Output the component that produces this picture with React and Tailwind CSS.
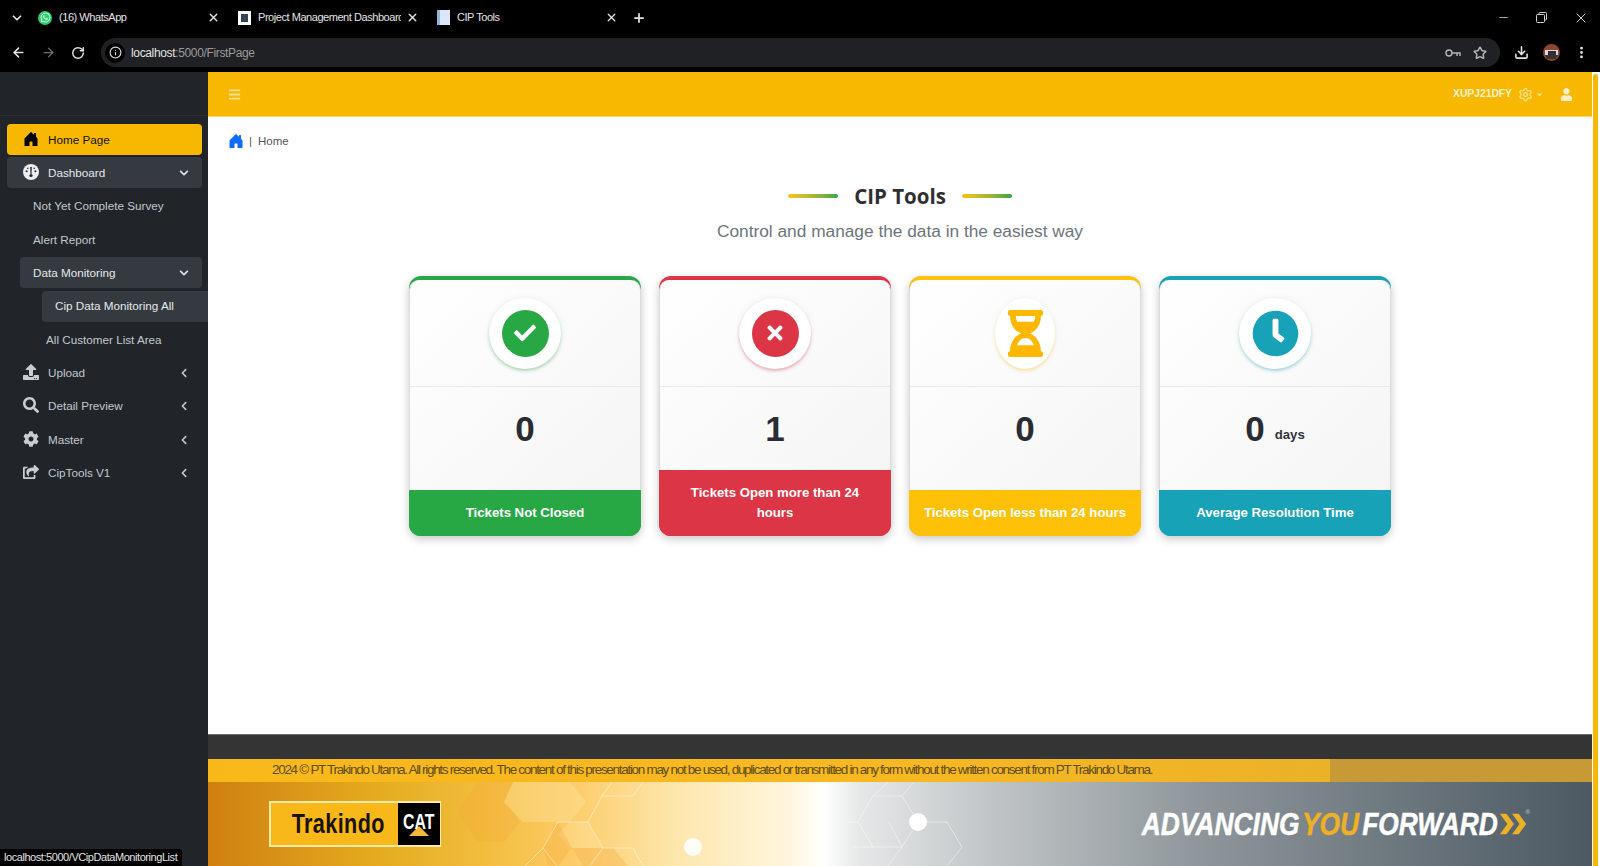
import React from "react";
import {
  FaUpload,
  FaSearch,
  FaCog,
  FaShareSquare,
  FaChevronDown,
  FaChevronLeft,
  FaBars,
  FaUser,
  FaCheck,
  FaTimes,
  FaHourglassHalf,
  FaClock,
  FaWhatsapp,
  FaCaretDown,
} from "react-icons/fa";
import { BsHouseDoorFill } from "react-icons/bs";
import {
  ArrowLeft,
  ArrowRight,
  RotateCw,
  Info,
  Star,
  Download,
  EllipsisVertical,
  X,
  Plus,
  Minus,
  ChevronDown,
  Settings,
} from "lucide-react";

const tabs = [
  { title: "(16) WhatsApp", kind: "wa", width: "w-[200px]" },
  { title: "Project Management Dashboard", kind: "doc", width: "w-[199px]" },
  { title: "CIP Tools", kind: "page", width: "w-[199px]" },
];

function KeyIcon() {
  return (
    <svg width="16" height="10" viewBox="0 0 16 10" fill="none" stroke="currentColor" strokeWidth="1.4">
      <circle cx="4" cy="5" r="3" />
      <path d="M7 5h8v3M12 5v3" />
    </svg>
  );
}

function RestoreIcon() {
  return (
    <svg width="11" height="11" viewBox="0 0 11 11" fill="none" stroke="#d0d0d0" strokeWidth="1">
      <rect x="0.5" y="2.5" width="8" height="8" rx="1" />
      <path d="M3 2.5V1.5a1 1 0 0 1 1-1h5.5a1 1 0 0 1 1 1V7a1 1 0 0 1-1 1h-1" />
    </svg>
  );
}

function Avatar() {
  return (
    <svg width="17" height="17" viewBox="0 0 17 17">
      <circle cx="8.5" cy="8.5" r="8.5" fill="#8f4334" />
      <rect x="2" y="6" width="13" height="5" fill="#d8d8d8" />
      <rect x="5" y="7" width="8" height="4" fill="#2c3035" />
      <path d="M2 11h13l-2 4H4z" fill="#3b3130" />
    </svg>
  );
}

function BrowserChrome() {
  return (
    <div className="h-[72px] bg-black text-[#e3e3e3] font-['Liberation_Sans',sans-serif] shrink-0">
      <div className="h-[35px] flex items-center">
        <div className="w-[33px] flex justify-center">
          <ChevronDown size={14} strokeWidth={3} />
        </div>
        {tabs.map((t) => (
          <div key={t.title} className={`${t.width} flex items-center pl-[5px]`}>
            {t.kind === "wa" && (
              <div className="w-[14px] h-[14px] rounded-full bg-[#25d366] flex items-center justify-center shrink-0">
                <FaWhatsapp size={11} className="text-white" />
              </div>
            )}
            {t.kind === "doc" && (
              <div className="w-[13px] h-[14px] bg-white flex items-center justify-center shrink-0">
                <div className="w-[7px] h-[8px] bg-[#33465a]" />
              </div>
            )}
            {t.kind === "page" && (
              <div className="w-[13px] h-[15px] bg-[#dce8f7] border-l-[3px] border-[#8fb4e0] shrink-0" />
            )}
            <span className="ml-[7px] text-[11px] tracking-[-0.45px] flex-1 whitespace-nowrap overflow-hidden">{t.title}</span>
            <X size={13} strokeWidth={2.5} className="ml-[5px] mr-[13px] shrink-0" />
          </div>
        ))}
        <Plus size={14} strokeWidth={3} className="ml-[1px]" />
        <div className="ml-auto flex items-center gap-[26px] pr-[11px]">
          <Minus size={13} className="text-[#a9a9a9]" />
          <RestoreIcon />
          <X size={16} strokeWidth={1.5} className="text-[#d0d0d0]" />
        </div>
      </div>
      <div className="h-[35px] flex items-center">
        <div className="w-[101px] flex items-center pl-[11px] gap-[15px]">
          <ArrowLeft size={15} strokeWidth={2.5} />
          <ArrowRight size={15} strokeWidth={2} className="text-[#6f6f6f]" />
          <RotateCw size={14} strokeWidth={2.5} />
        </div>
        <div className="w-[1399px] h-[29px] rounded-full bg-[#202124] flex items-center pl-[4px] pr-[13px]">
          <div className="w-[20px] h-[20px] rounded-full bg-black flex items-center justify-center">
            <Info size={13} />
          </div>
          <span className="ml-[6px] text-[12px] tracking-[-0.35px] text-[#e3e3e3]">
            localhost<span className="text-[#9a9a9a]">:5000/FirstPage</span>
          </span>
          <div className="ml-auto flex items-center gap-[12px] text-[#b5b5b5]">
            <KeyIcon />
            <Star size={14} strokeWidth={2.5} />
          </div>
        </div>
        <div className="flex-1 flex items-center justify-between pl-[14px] pr-[11px]">
          <Download size={15} strokeWidth={2.5} />
          <Avatar />
          <EllipsisVertical size={15} strokeWidth={2.5} />
        </div>
      </div>
    </div>
  );
}

function GaugeIcon({ size, className }) {
  return (
    <svg width={size} height={size} viewBox="0 0 16 16" className={className}>
      <circle cx="8" cy="8" r="8" fill="#eceef0" />
      <path d="M7.2 3h1.6l-.3 7h-1z" fill="#212529" />
      <circle cx="8" cy="11.5" r="1.6" fill="#212529" />
      <circle cx="3.6" cy="7.2" r="1" fill="#212529" />
      <circle cx="12.4" cy="7.2" r="1" fill="#212529" />
      <circle cx="4.8" cy="4.2" r="0.8" fill="#212529" />
      <circle cx="11.2" cy="4.2" r="0.8" fill="#212529" />
    </svg>
  );
}

function SideRow({ icon: Icon, label, tone = "idle", indent = "", arrow, textPad = "pl-[41px]" }) {
  const tones = {
    home: "bg-[#f8b700] text-[#111] shadow-sm",
    open: "bg-[#343a40] text-[#e6e8ea]",
    idle: "text-[#c2c7d0]",
  };
  return (
    <div className={`relative h-[31px] shrink-0 rounded-[4px] flex items-center ${indent} ${tones[tone]}`}>
      {Icon && (
        <span className="absolute left-[16px] -top-[1px] h-full flex items-center">
          <Icon size={16} className={tone === "home" ? "text-black" : "text-[#c9cdd2]"} />
        </span>
      )}
      <span className={`text-[11.7px] whitespace-nowrap ${textPad}`}>{label}</span>
      {arrow === "down" && <FaChevronDown size={10} className="absolute right-[13px] text-[#e6e8ea]" />}
      {arrow === "left" && <FaChevronLeft size={10} className="absolute right-[13px] text-[#c2c7d0]" />}
    </div>
  );
}

function Sidebar() {
  return (
    <aside className="w-[208px] shrink-0 bg-[#212529] font-['Liberation_Sans',sans-serif]">
      <div className="h-[44px] border-b border-[#2d3237]" />
      <nav className="pt-[8px] flex flex-col gap-[2.35px]">
        <SideRow icon={BsHouseDoorFill} label="Home Page" tone="home" indent="ml-[7px] mr-[6px]" />
        <SideRow icon={GaugeIcon} label="Dashboard" tone="open" indent="ml-[7px] mr-[6px]" arrow="down" />
        <SideRow label="Not Yet Complete Survey" indent="ml-[7px] mr-[6px]" textPad="pl-[26px]" />
        <SideRow label="Alert Report" indent="ml-[7px] mr-[6px]" textPad="pl-[26px]" />
        <SideRow label="Data Monitoring" tone="open" indent="ml-[20px] mr-[6px]" arrow="down" textPad="pl-[13px]" />
        <SideRow label="Cip Data Monitoring All" tone="open" indent="ml-[42px] rounded-r-none" textPad="pl-[13px]" />
        <SideRow label="All Customer List Area" indent="ml-[7px] mr-[6px]" textPad="pl-[39px]" />
        <SideRow icon={FaUpload} label="Upload" indent="ml-[7px] mr-[6px]" arrow="left" />
        <SideRow icon={FaSearch} label="Detail Preview" indent="ml-[7px] mr-[6px]" arrow="left" />
        <SideRow icon={FaCog} label="Master" indent="ml-[7px] mr-[6px]" arrow="left" />
        <SideRow icon={FaShareSquare} label="CipTools V1" indent="ml-[7px] mr-[6px]" arrow="left" />
      </nav>
    </aside>
  );
}

function TopBar() {
  return (
    <div className="h-[45px] shrink-0 bg-[#f8b700] border-b border-[#ffd761] flex items-center pl-[20px] pr-[19px] text-[#ffe38f] font-['Liberation_Sans',sans-serif]">
      <FaBars size={13} />
      <div className="ml-auto flex items-center">
        <span className="text-[10.3px] font-bold text-[#fff3d1]">XUPJ21DFY</span>
        <Settings size={15} className="ml-[6px]" />
        <FaCaretDown size={9} className="ml-[2px]" />
        <FaUser size={13} className="ml-[16px] text-[#ffefc4]" />
      </div>
    </div>
  );
}

const cards = [
  {
    value: "0",
    label: "Tickets Not Closed",
    top: "bg-[#28a745]",
    band: "bg-[#28a745]",
    glow: "shadow-[0_2px_3px_rgba(40,167,69,0.35),0_0_8px_rgba(0,0,0,0.06)]",
    inner: "bg-[#28a745]",
    icon: <FaCheck size={22} className="text-white" />,
  },
  {
    value: "1",
    label: "Tickets Open more than 24 hours",
    top: "bg-[#dc3545]",
    band: "bg-[#dc3545]",
    glow: "shadow-[0_2px_3px_rgba(220,53,69,0.35),0_0_8px_rgba(0,0,0,0.06)]",
    inner: "bg-[#dc3545]",
    icon: <FaTimes size={22} className="text-white" />,
  },
  {
    value: "0",
    label: "Tickets Open less than 24 hours",
    top: "bg-[#ffc107]",
    band: "bg-[#ffc107]",
    glow: "shadow-[0_2px_3px_rgba(255,193,7,0.35),0_0_8px_rgba(0,0,0,0.04)]",
    hourglass: true,
    icon: <FaHourglassHalf size={47} className="text-[#ffb700]" />,
  },
  {
    value: "0",
    unit: "days",
    label: "Average Resolution Time",
    top: "bg-[#17a2b8]",
    band: "bg-[#17a2b8]",
    glow: "shadow-[0_2px_3px_rgba(23,162,184,0.35),0_0_8px_rgba(0,0,0,0.06)]",
    clock: true,
    icon: <FaClock size={47} className="text-[#17a2b8]" />,
  },
];

function StatCard({ card }) {
  const shape = card.hourglass ? "w-[60px]" : "w-[72px]";
  // red card wraps its label to two lines, so the number must not be centred in what is left
  return (
    <div className={`w-[232px] h-[260px] rounded-[12px] overflow-hidden flex flex-col ${card.top} pt-[4px] shadow-[0_3px_10px_rgba(0,0,0,0.22)]`}>
      <div className="flex-1 bg-gradient-to-br from-white to-[#f5f5f5] rounded-t-[10px] flex flex-col border-x border-[#dcdcdc]">
        <div className="h-[107px] border-b border-[#e9e9e9] flex items-center justify-center">
          <div className={`${shape} h-[71px] rounded-[50%] bg-white flex items-center justify-center ${card.glow}`}>
            {card.hourglass || card.clock ? (
              card.icon
            ) : (
              <div className={`w-[47px] h-[47px] rounded-full flex items-center justify-center ${card.inner}`}>
                {card.icon}
              </div>
            )}
          </div>
        </div>
        <div className="flex-1 flex items-start justify-center pt-[24px]">
          <span className="text-[35px] leading-none font-bold text-[#2b2b33]">{card.value}</span>
          {card.unit && <span className="ml-[10px] mt-[14px] text-[13.2px] font-bold text-[#33333a]">{card.unit}</span>}
        </div>
      </div>
      <div className={`${card.band} px-[12px] py-[13px] text-center text-[13.2px] leading-[20px] font-bold text-white`}>
        {card.label}
      </div>
    </div>
  );
}

function TitleBar() {
  return <div className="w-[50px] h-[4px] rounded-full bg-gradient-to-r from-[#ffc107] to-[#28a745]" />;
}

function Content() {
  return (
    <div className="flex-1 bg-white font-['Liberation_Sans',sans-serif]">
      <div className="pl-[20px] pt-[16px] h-[49px] flex items-start text-[11.5px] text-[#555]">
        <BsHouseDoorFill size={16} className="text-[#0d6efd]" />
        <span className="ml-[5px] text-[#555] leading-[16px]">|</span>
        <span className="ml-[6px] leading-[16px]">Home</span>
      </div>
      <div className="pt-[16px] flex flex-col items-center">
        <div className="flex items-center gap-[16px]">
          <TitleBar />
          <h1 className="text-[20.5px] leading-[28px] font-bold text-[#2f2f33] font-['Open_Sans',sans-serif]">CIP Tools</h1>
          <TitleBar />
        </div>
        <p className="mt-[9px] text-[17.3px] leading-[24px] text-[#6c757d]">Control and manage the data in the easiest way</p>
        <div className="mt-[33px] flex gap-[18px]">
          {cards.map((c) => (
            <StatCard key={c.label} card={c} />
          ))}
        </div>
      </div>
    </div>
  );
}

function HexLines() {
  return (
    <svg viewBox="0 0 1384 84" className="absolute inset-0 w-full h-full" preserveAspectRatio="none">
      <g fill="rgba(255,236,180,0.3)">
        <polygon points="305,0 362,0 378,20 362,40 315,40 296,20" />
        <polygon points="362,40 380,40 395,66 362,66 350,52" />
      </g>
      <g fill="rgba(244,170,60,0.3)">
        <polygon points="335,66 350,40 364,66 350,84 340,84" />
        <polygon points="364,66 405,66 420,84 375,84" />
        <polygon points="270,0 305,0 296,20 312,40 296,60 270,60 250,30" />
      </g>
      <g fill="none" stroke="rgba(255,255,255,0.45)" strokeWidth="1">
        <path d="M350 40h30M380 40l14-26h31M380 40l15 26h30M395 66l-13 18M350 40l-15 26 14 18M335 66l-18 18" />
        <path d="M394 14l10-14M425 14l10-14M425 66l10 18" />
        <path d="M665 14h29l16 26-16 25h-29l-15-25zM665 14l15-14M694 14l12-14" />
        <path d="M710 40h29l15 25-15 19M694 65l-14 19M694 65l-13-25" />
        <path d="M640 40h10M665 65h-20" />
      </g>
      <circle cx="485" cy="65" r="9" fill="#fff" opacity="0.9" />
      <circle cx="710" cy="40" r="9" fill="#fff" />
    </svg>
  );
}

function Footer() {
  return (
    <footer className="shrink-0 font-['Liberation_Sans',sans-serif]">
      <div className="h-[25px] bg-[#343434] border-t border-[#6a6a6a]" />
      <div className="h-[23px] bg-gradient-to-r from-[#f9b81a] via-[#f8b820] to-[#e3ae2c] flex items-center relative">
        <span className="absolute right-0 top-0 bottom-0 w-[262px] bg-[#c79a36]" />
        <p className="pl-[64px] text-[13.5px] tracking-[-1.3px] text-[#5f4d1a] whitespace-nowrap relative">
          2024 © PT Trakindo Utama. All rights reserved. The content of this presentation may not be used, duplicated or transmitted in any form without the written consent from PT Trakindo Utama.
        </p>
      </div>
      <div className="relative h-[84px] overflow-hidden flex items-center justify-between pl-[61px] pr-[62px] bg-[linear-gradient(90deg,#cf7f10_0%,#e4ab1f_12%,#f2bd3d_20%,#fccb66_26%,#fde7ae_34%,#fff6dd_42%,#ffffff_44.5%,#e6e8e8_47%,#bfc3c5_57%,#8d959a_72%,#4c5963_100%)]">
        <HexLines />
        <div className="relative w-[172px] h-[46px] border-2 border-[#fde9a8] bg-[#f9b81a] flex items-center">
          <span className="flex-1 pl-[10px] text-center text-[27px] font-bold text-[#1a1206] tracking-[0.5px] scale-x-[0.8]">Trakindo</span>
          <div className="w-[42px] h-full bg-black flex flex-col items-center justify-center">
            <span className="text-[22px] leading-[18px] font-bold text-white scale-x-[0.72]">CAT</span>
            <span className="w-0 h-0 border-l-[10px] border-r-[10px] border-b-[10px] border-l-transparent border-r-transparent border-b-[#f4b93c] -mt-[5px]" />
          </div>
        </div>
        <div className="relative flex items-center">
          <div className="text-[31px] leading-none font-bold italic text-white whitespace-nowrap [word-spacing:-5px] [-webkit-text-stroke:0.5px] origin-right scale-x-[0.85]">
            ADVANCING <span className="text-[#eeb024]">YOU</span> FORWARD
          </div>
          <svg width="30" height="24" viewBox="0 0 32 24" className="shrink-0">
            <path d="M2 1h7l8 11-8 11H2l8-11z M15 1h7l8 11-8 11h-7l8-11z" fill="#eeb024" />
          </svg>
          <span className="text-[6px] leading-none text-[#d6d9db] self-start -ml-[2px]">®</span>
        </div>
      </div>
    </footer>
  );
}

export default function App() {
  return (
    <div className="relative w-[1600px] h-[866px] overflow-hidden flex flex-col bg-white">
      <BrowserChrome />
      <div className="flex-1 flex min-h-0">
        <Sidebar />
        <main className="flex-1 flex flex-col min-w-0">
          <TopBar />
          <Content />
          <Footer />
        </main>
        <div className="w-[8px] shrink-0 bg-white pt-[2px] pl-[1px]">
          <div className="w-[5px] h-full rounded-t-full bg-[#f8b700]" />
        </div>
      </div>
      <div className="absolute left-0 bottom-0 h-[17px] w-[182px] bg-black rounded-tr-[3px] flex items-center pl-[4px] text-[11px] tracking-[-0.44px] text-[#e3e3e3] font-['Liberation_Sans',sans-serif]">
        localhost:5000/VCipDataMonitoringList
      </div>
    </div>
  );
}
